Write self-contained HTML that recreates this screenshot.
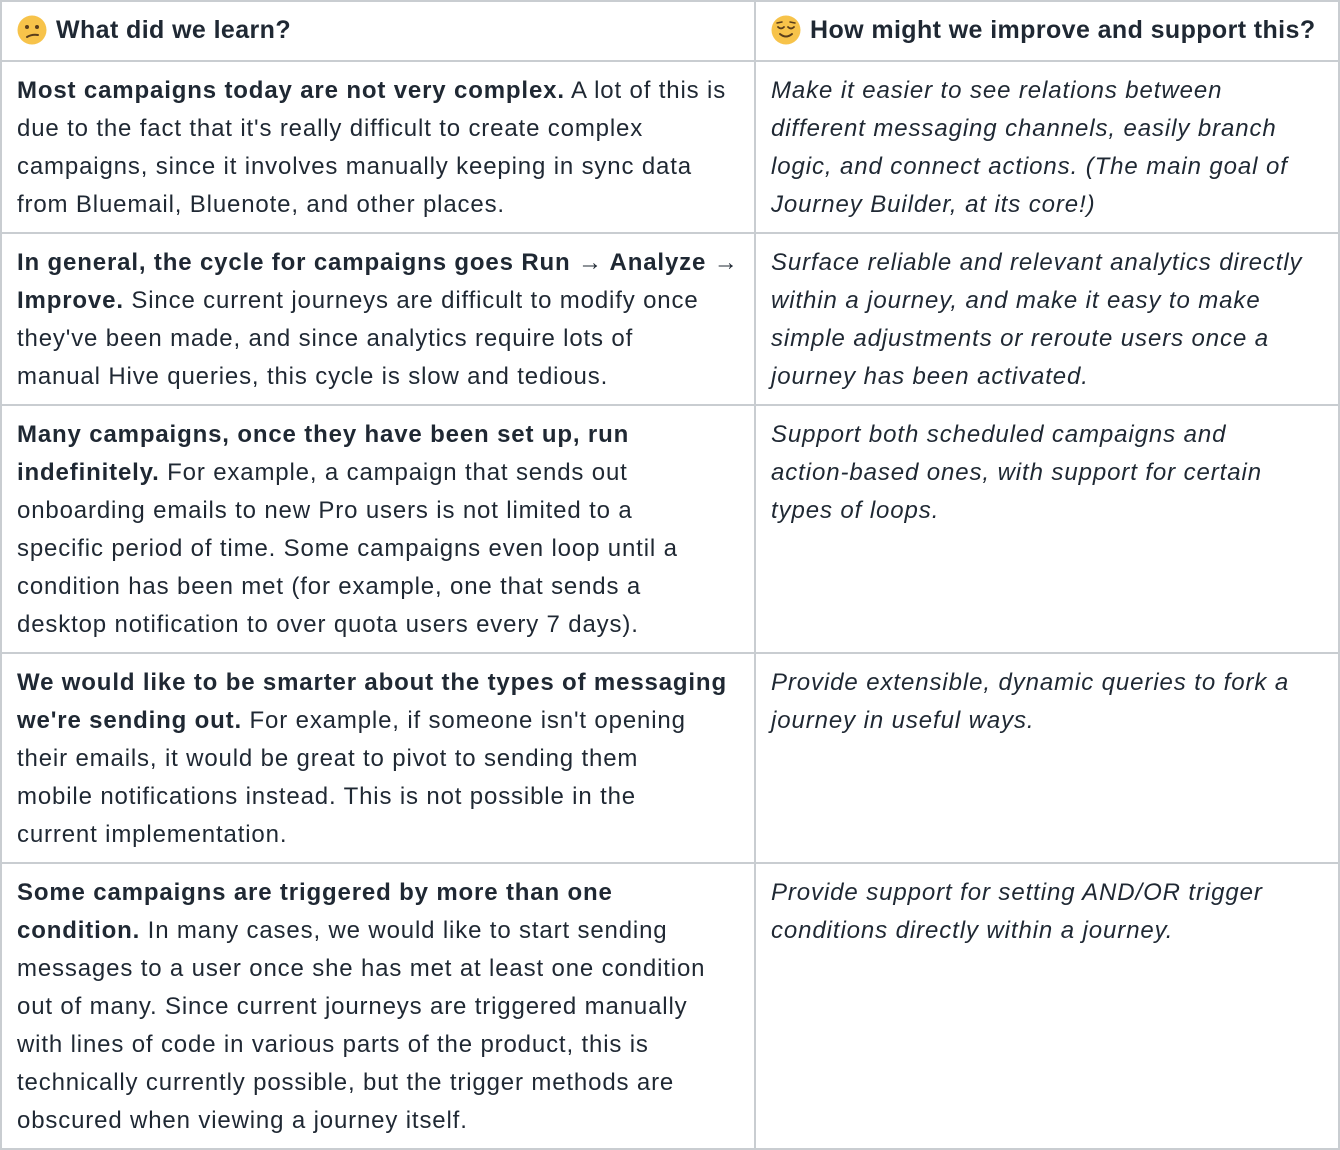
<!DOCTYPE html>
<html><head><meta charset="utf-8"><style>
html,body{margin:0;padding:0;background:#fff;}
body{width:1340px;height:1150px;position:relative;overflow:hidden;font-family:"Liberation Sans",sans-serif;color:#1f2833;font-size:24px;line-height:38px;}
.h{position:absolute;background:#c9cdd1;}
.c{position:absolute;white-space:nowrap;letter-spacing:0.85px;}
.i{font-style:italic;letter-spacing:0.9px;}
b{font-weight:bold;}
.hd{position:absolute;font-weight:bold;font-size:25px;line-height:30px;white-space:nowrap;letter-spacing:0.4px;}
svg{position:absolute;}
</style></head><body>
<div class="h" style="left:0;top:0;width:1340px;height:2px"></div>
<div class="h" style="left:0;top:1148px;width:1340px;height:2px"></div>
<div class="h" style="left:0;top:0;width:2px;height:1150px"></div>
<div class="h" style="left:1338px;top:0;width:2px;height:1150px"></div>
<div class="h" style="left:754px;top:0;width:2px;height:1150px"></div>
<div class="h" style="left:0;top:60px;width:1340px;height:2px"></div>
<div class="h" style="left:0;top:232px;width:1340px;height:2px"></div>
<div class="h" style="left:0;top:404px;width:1340px;height:2px"></div>
<div class="h" style="left:0;top:652px;width:1340px;height:2px"></div>
<div class="h" style="left:0;top:862px;width:1340px;height:2px"></div>

<svg style="left:17px;top:15px" width="30" height="30" viewBox="0 0 30 30"><circle cx="15" cy="15" r="14.5" fill="#f7c34a"/><circle cx="10" cy="12" r="2" fill="#5a3e1b"/><circle cx="20" cy="12" r="2" fill="#5a3e1b"/><path d="M10 22 Q15 19 21 20" stroke="#5a3e1b" stroke-width="2" fill="none" stroke-linecap="round"/></svg>
<div class="hd" style="left:56px;top:15px">What did we learn?</div>
<svg style="left:771px;top:15px" width="30" height="30" viewBox="0 0 30 30"><circle cx="15" cy="15" r="14.5" fill="#f7c34a"/><path d="M7 12 Q10 15 13 12 M17 12 Q20 15 23 12" stroke="#5a3e1b" stroke-width="1.8" fill="none" stroke-linecap="round"/><path d="M6 8 L11 7 M24 8 L19 7" stroke="#5a3e1b" stroke-width="1.5" stroke-linecap="round"/><path d="M9 19 Q15 24 21 19" stroke="#5a3e1b" stroke-width="2" fill="none" stroke-linecap="round"/></svg>
<div class="hd" style="left:810px;top:15px">How might we improve and support this?</div>

<div class="c" style="left:17px;top:72px"><b>Most campaigns today are not very complex.</b> A lot of this is<br>due to the fact that it's really difficult to create complex<br>campaigns, since it involves manually keeping in sync data<br>from Bluemail, Bluenote, and other places.</div>
<div class="c i" style="left:771px;top:72px">Make it easier to see relations between<br>different messaging channels, easily branch<br>logic, and connect actions. (The main goal of<br>Journey Builder, at its core!)</div>

<div class="c" style="left:17px;top:244px"><b>In general, the cycle for campaigns goes Run → Analyze →<br>Improve.</b> Since current journeys are difficult to modify once<br>they've been made, and since analytics require lots of<br>manual Hive queries, this cycle is slow and tedious.</div>
<div class="c i" style="left:771px;top:244px">Surface reliable and relevant analytics directly<br>within a journey, and make it easy to make<br>simple adjustments or reroute users once a<br>journey has been activated.</div>

<div class="c" style="left:17px;top:416px"><b>Many campaigns, once they have been set up, run<br>indefinitely.</b> For example, a campaign that sends out<br>onboarding emails to new Pro users is not limited to a<br>specific period of time. Some campaigns even loop until a<br>condition has been met (for example, one that sends a<br>desktop notification to over quota users every 7 days).</div>
<div class="c i" style="left:771px;top:416px">Support both scheduled campaigns and<br>action-based ones, with support for certain<br>types of loops.</div>

<div class="c" style="left:17px;top:664px"><b>We would like to be smarter about the types of messaging<br>we're sending out.</b> For example, if someone isn't opening<br>their emails, it would be great to pivot to sending them<br>mobile notifications instead. This is not possible in the<br>current implementation.</div>
<div class="c i" style="left:771px;top:664px">Provide extensible, dynamic queries to fork a<br>journey in useful ways.</div>

<div class="c" style="left:17px;top:874px"><b>Some campaigns are triggered by more than one<br>condition.</b> In many cases, we would like to start sending<br>messages to a user once she has met at least one condition<br>out of many. Since current journeys are triggered manually<br>with lines of code in various parts of the product, this is<br>technically currently possible, but the trigger methods are<br>obscured when viewing a journey itself.</div>
<div class="c i" style="left:771px;top:874px">Provide support for setting AND/OR trigger<br>conditions directly within a journey.</div>
</body></html>
